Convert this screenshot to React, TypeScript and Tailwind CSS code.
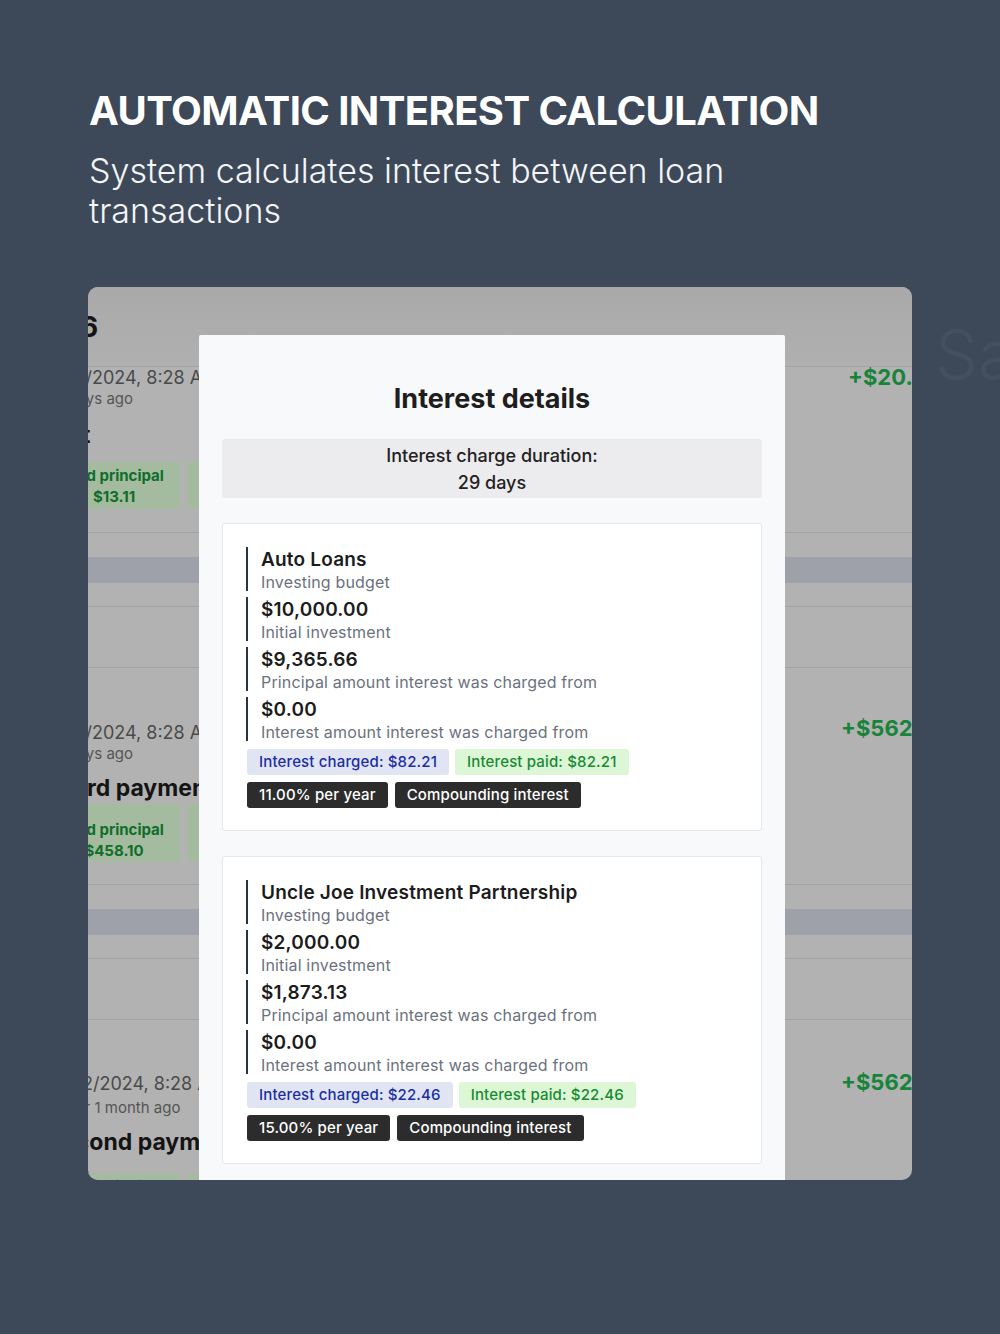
import React from "react";

type Item = { title: string; sub: string };

function Card({ name, initial, principal, charged, rate }: { name: string; initial: string; principal: string; charged: string; rate: string }) {
  const items: Item[] = [
    { title: name, sub: "Investing budget" },
    { title: initial, sub: "Initial investment" },
    { title: principal, sub: "Principal amount interest was charged from" },
    { title: "$0.00", sub: "Interest amount interest was charged from" },
  ];
  return (
    <div className="bg-white border border-[#e4e7eb] rounded-[3px] pl-[23px] pr-[23px] pt-[23px] pb-[22px]">
      <div className="flex flex-col gap-[6px]">
        {items.map((it, i) => (
          <div key={i} className="border-l-2 border-[#2a3344] pl-[13px] h-[44px] flex flex-col">
            <div className="text-[19px] leading-[25px] font-semibold text-[#1c1c1c] tracking-[0.01em]">{it.title}</div>
            <div className="text-[16px] leading-[20px] text-[#6b727d] tracking-[0.01em]">{it.sub}</div>
          </div>
        ))}
      </div>
      <div className="flex gap-[6px] mt-[8px] ml-px">
        <div className="h-[26px] px-[12px] flex items-center rounded-[3px] bg-[#e1e5f3] text-[#1b2ea3] text-[15px] font-medium tracking-[0.01em]">
          Interest charged: {charged}
        </div>
        <div className="h-[26px] px-[12px] flex items-center rounded-[3px] bg-[#dcf6d6] text-[#178a33] text-[15px] font-medium tracking-[0.01em]">
          Interest paid: {charged}
        </div>
      </div>
      <div className="flex gap-[7px] mt-[7px] ml-px">
        <div className="h-[26px] px-[12px] flex items-center rounded-[3px] bg-[#2c2c2c] text-white text-[15px] font-medium tracking-[0.01em]">
          {rate}
        </div>
        <div className="h-[26px] px-[12px] flex items-center rounded-[3px] bg-[#2c2c2c] text-white text-[15px] font-medium tracking-[0.01em]">
          Compounding interest
        </div>
      </div>
    </div>
  );
}

function Boxes({ amount }: { amount: string }) {
  return (
    <div className="flex gap-[7px] -ml-[40px]">
      <div className="shrink-0 w-[132px] h-[47px] rounded-[4px] bg-[#a4bb9f] flex flex-col items-center justify-center text-[15px] leading-[21px] font-bold text-[#0f6e2a]">
        <div>Paid principal</div>
        <div>{amount}</div>
      </div>
      <div className="shrink-0 w-[132px] h-[47px] rounded-[4px] bg-[#a4bb9f]" />
    </div>
  );
}

function Gap() {
  return (
    <div className="border-b border-[#a3a3a3]">
      <div className="h-[24px]" />
      <div className="h-[26px] bg-[#9ea0aa]" />
      <div className="h-[23px]" />
    </div>
  );
}

export default function App() {
  return (
    <div className="relative w-[1000px] h-[1334px] overflow-hidden bg-[#3d4959] font-['Inter','Noto_Sans',sans-serif]">
      <div className="absolute left-[935px] top-[320px] text-[68px] font-light leading-none text-[#445060]">Sa</div>
      <div className="relative pl-[89px] pt-[87px]">
        <h1 className="text-[40px] leading-[48px] font-bold text-white tracking-[-0.015em]">AUTOMATIC INTEREST CALCULATION</h1>
        <p className="mt-[16px] w-[822px] text-[34px] leading-[40px] font-light text-[#f3f5f8]">
          System calculates interest between loan transactions
        </p>
      </div>

      <div className="relative ml-[88px] mt-[56px] w-[824px] h-[893px] rounded-[10px] overflow-hidden bg-[#b2b2b2]">
        {/* underlying dimmed page */}
        <div className="flex flex-col">
          <div className="h-[80px] bg-gradient-to-b from-[#a9a9a9] to-[#b0b0b0] border-b border-[#a3a3a3] pt-[22px]">
            <div className="-ml-[26px] text-[28px] leading-[36px] font-bold text-[#141414]">56</div>
          </div>

          {/* row 1 */}
          <div className="h-[166px] border-b border-[#a3a3a3] flex">
            <div className="shrink-0 w-[697px] flex flex-col">
              <div className="-ml-[46px] text-[18px] leading-[22px] text-[#4a4a4a] whitespace-nowrap">10/21/2024, 8:28 AM</div>
              <div className="-ml-[33px] text-[15px] leading-[20px] text-[#555555] whitespace-nowrap">3 days ago</div>
              <div className="-ml-[84px] mt-[10px] text-[23px] leading-[32px] font-bold text-[#141414] whitespace-nowrap">Deposit</div>
              <div className="mt-[11px]"><Boxes amount="$13.11" /></div>
            </div>
            <div className="shrink-0 pl-[63px] text-[22px] leading-[20px] font-bold text-[#17843a] whitespace-nowrap">+$20.00</div>
          </div>

          <Gap />
          <div className="h-[61px] border-b border-[#a3a3a3]" />

          {/* row 2 */}
          <div className="h-[217px] border-b border-[#a3a3a3] flex">
            <div className="shrink-0 w-[697px] flex flex-col pt-[54px]">
              <div className="-ml-[46px] text-[18px] leading-[22px] text-[#4a4a4a] whitespace-nowrap">10/21/2024, 8:28 AM</div>
              <div className="-ml-[33px] text-[15px] leading-[20px] text-[#555555] whitespace-nowrap">3 days ago</div>
              <div className="-ml-[37px] mt-[8px] text-[23px] leading-[32px] font-bold text-[#141414] whitespace-nowrap">Third payment</div>
              <div className="-ml-[40px] flex gap-[7px]">
                <div className="shrink-0 w-[132px] h-[58px] rounded-[4px] bg-[#a4bb9f] flex flex-col items-center justify-end pb-[1px] text-[15px] leading-[21px] font-bold text-[#0f6e2a]">
                  <div>Paid principal</div>
                  <div>$458.10</div>
                </div>
                <div className="shrink-0 w-[132px] h-[58px] rounded-[4px] bg-[#a4bb9f]" />
              </div>
            </div>
            <div className="shrink-0 pl-[56px] pt-[49px] text-[22px] leading-[22px] font-bold text-[#17843a] whitespace-nowrap">+$562.40</div>
          </div>

          <Gap />
          <div className="h-[61px] border-b border-[#a3a3a3]" />

          {/* row 3 */}
          <div className="h-[217px] flex">
            <div className="shrink-0 w-[697px] flex flex-col pt-[53px]">
              <div className="-ml-[46px] text-[18px] leading-[22px] text-[#4a4a4a] whitespace-nowrap">09/22/2024, 8:28 AM</div>
              <div className="-ml-[29px] mt-[3px] text-[15px] leading-[20px] text-[#555555] whitespace-nowrap">over 1 month ago</div>
              <div className="-ml-[41px] mt-[8px] text-[23px] leading-[32px] font-bold text-[#141414] whitespace-nowrap">Second payment</div>
              <div className="mt-[15px]"><Boxes amount="$451.30" /></div>
            </div>
            <div className="shrink-0 pl-[56px] pt-[51px] text-[22px] leading-[22px] font-bold text-[#17843a] whitespace-nowrap">+$562.40</div>
          </div>
        </div>

        {/* modal */}
        <div className="absolute left-[111px] top-[48px] w-[586px] h-[900px] bg-[#f8f9fb] rounded-t-[2px] px-[23px] pt-[46px]">
          <h2 className="text-center text-[27px] leading-[36px] font-bold text-[#1e1e1e]">Interest details</h2>
          <div className="mt-[22px] h-[59px] bg-[#ececee] rounded-[3px] pt-[3px] text-center text-[18px] leading-[27px] font-medium text-[#222222]">
            <div>Interest charge duration:</div>
            <div>29 days</div>
          </div>
          <div className="mt-[25px] flex flex-col gap-[25px]">
            <Card name="Auto Loans" initial="$10,000.00" principal="$9,365.66" charged="$82.21" rate="11.00% per year" />
            <Card name="Uncle Joe Investment Partnership" initial="$2,000.00" principal="$1,873.13" charged="$22.46" rate="15.00% per year" />
          </div>
        </div>
      </div>
    </div>
  );
}
